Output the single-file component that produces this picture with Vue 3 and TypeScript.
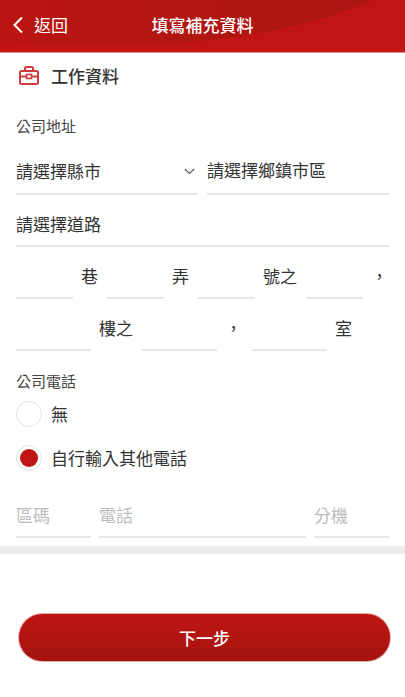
<script setup lang="ts">
interface Cell { w: number; suffix: string; sw: number }
const rowA: Cell[] = [
  { w: 57, suffix: '巷', sw: 34 },
  { w: 57, suffix: '弄', sw: 34 },
  { w: 57, suffix: '號之', sw: 51 },
  { w: 57, suffix: '，', sw: 26 },
]
const rowB: Cell[] = [
  { w: 75, suffix: '樓之', sw: 51 },
  { w: 75, suffix: '，', sw: 35 },
  { w: 75, suffix: '室', sw: 37 },
]
</script>

<template>
  <div class="page">
    <header class="top">
      <svg class="swoosh" viewBox="0 0 405 52" preserveAspectRatio="none" aria-hidden="true">
        <defs>
          <linearGradient id="sw" x1="0" y1="0" x2="1" y2="0">
            <stop offset="0" stop-color="#bb1512" />
            <stop offset="0.6" stop-color="#b01610" />
            <stop offset="1" stop-color="#ac1610" />
          </linearGradient>
        </defs>
        <path d="M0 0H372C330 20 270 34 200 41C130 47 50 46 0 42Z" fill="url(#sw)" />
      </svg>
      <div class="back">
        <svg width="12" height="18" viewBox="0 0 12 18" aria-hidden="true">
          <path d="M10 1.500 2.500 9 10 16.500" fill="none" stroke="#fff" stroke-width="2" />
        </svg>
        <span>返回</span>
      </div>
      <h1>填寫補充資料</h1>
    </header>

    <section class="title">
      <svg width="20" height="19" viewBox="0 0 20 19" aria-hidden="true">
        <g fill="none" stroke="#cf3a3a" stroke-width="2">
          <path d="M6 5V2.200C6 1.500 6.500 1 7.200 1h5.600c.7 0 1.200.5 1.200 1.200V5" />
          <rect x="1" y="5" width="18" height="13" rx="1.500" />
          <path d="M1 10.500H7.500M12.500 10.500H19" />
          <rect x="7.500" y="8.500" width="5" height="4" stroke-width="1.600" />
        </g>
      </svg>
      <span>工作資料</span>
    </section>

    <main class="form">
      <div class="label addr">公司地址</div>

      <div class="two">
        <div class="field select">
          <span>請選擇縣市</span>
          <svg width="11" height="7" viewBox="0 0 11 7" aria-hidden="true">
            <path d="M.8 1 5.500 5.500 10.200 1" fill="none" stroke="#555" stroke-width="1.100" />
          </svg>
        </div>
        <div class="field">請選擇鄉鎮市區</div>
      </div>
      <div class="row">
        <div class="field grow">請選擇道路</div>
      </div>
      <div class="row">
        <template v-for="c in rowA" :key="c.suffix">
          <div class="field" :style="{ width: c.w + 'px' }"></div>
          <span class="suffix" :style="{ width: c.sw + 'px' }">{{ c.suffix }}</span>
        </template>
      </div>
      <div class="row">
        <template v-for="c in rowB" :key="c.suffix">
          <div class="field" :style="{ width: c.w + 'px' }"></div>
          <span class="suffix" :style="{ width: c.sw + 'px' }">{{ c.suffix }}</span>
        </template>
      </div>

      <div class="label phone">公司電話</div>
      <div class="radio first">
        <span class="dot"></span>
        <span class="radio-text">無</span>
      </div>
      <div class="radio second">
        <span class="dot on"></span>
        <span class="radio-text">自行輸入其他電話</span>
      </div>

      <div class="row tel">
        <div class="field ph area">區碼</div>
        <div class="field ph num">電話</div>
        <div class="field ph area">分機</div>
      </div>
    </main>

    <div class="band"></div>

    <div class="action">
      <button type="button">下一步</button>
    </div>
  </div>
</template>

<style>
html, body { margin: 0; background: #fff; }
</style>

<style scoped>
.page {
  width: 405px;
  height: 697px;
  overflow: hidden;
  display: flex;
  flex-direction: column;
  background: #fff;
  color: #333;
  font-family: "Noto Sans CJK TC", "Noto Sans", sans-serif;
}
.top {
  position: relative;
  box-sizing: border-box;
  height: 53px;
  flex: none;
  background: #c01512;
  border-bottom: 1px solid #e68f8d;
  color: #fff;
  display: flex;
  align-items: center;
  justify-content: center;
}
.swoosh { position: absolute; inset: 0; width: 100%; height: 100%; }
.back {
  position: absolute;
  left: 12px;
  top: 0;
  height: 49px;
  display: flex;
  align-items: center;
  gap: 10px;
  font-size: 17px;
}
h1 {
  position: relative;
  margin: 0 0 4px;
  font-size: 17px;
  font-weight: 500;
}
.title {
  box-sizing: border-box;
  height: 47px;
  flex: none;
  display: flex;
  align-items: center;
  gap: 12px;
  padding: 0 0 2px 19px;
  font-size: 17px;
  font-weight: 500;
  color: #333;
}
.form { padding: 0 16px; flex: none; }
.label { font-size: 15px; line-height: 22px; color: #444; }
.addr { margin-top: 15px; }
.row { display: flex; }
.two { display: grid; grid-template-columns: 1fr 1fr; gap: 9px; margin-top: 5px; }
.field {
  box-sizing: border-box;
  height: 52px;
  flex: none;
  padding-top: 9px;
  border-bottom: 2px solid #e6e6e6;
  font-size: 17px;
  line-height: 40px;
  color: #333;
}
.two .field { padding-top: 8px; height: 53px; padding-bottom: 1px; }
.grow { flex: 1; }
.select { display: flex; align-items: center; justify-content: space-between; padding-right: 3px; }
.suffix {
  flex: none;
  box-sizing: border-box;
  padding: 9px 0 0 8px;
  font-size: 17px;
  line-height: 40px;
  color: #333;
}
.phone { margin-top: 19px; }
.radio {
  display: flex;
  align-items: center;
  gap: 9px;
  height: 26px;
  font-size: 17px;
  color: #333;
}
.radio-text { margin-bottom: 2px; }
.first { margin-top: 9px; }
.second { margin-top: 18px; }
.dot {
  box-sizing: border-box;
  width: 26px;
  height: 26px;
  flex: none;
  border: 1px solid #e2e2e2;
  border-radius: 50%;
  display: flex;
  align-items: center;
  justify-content: center;
}
.dot.on::after {
  content: "";
  width: 18px;
  height: 18px;
  border-radius: 50%;
  background: #c01512;
}
.tel { gap: 8px; margin-top: 15px; }
.ph { color: #bdbdbd; }
.area { width: 75px; }
.num { flex: 1; }
.band { height: 8px; flex: none; margin-top: 8px; background: #ececec; }
.action { padding: 59px 14px 0 18px; }
button {
  display: block;
  width: 100%;
  height: 49px;
  border: 1px solid #e8a6a4;
  border-radius: 25px;
  background: linear-gradient(#c01512, #a3140e);
  color: #fff;
  font: 500 17px "Noto Sans CJK TC", sans-serif;
}
</style>
